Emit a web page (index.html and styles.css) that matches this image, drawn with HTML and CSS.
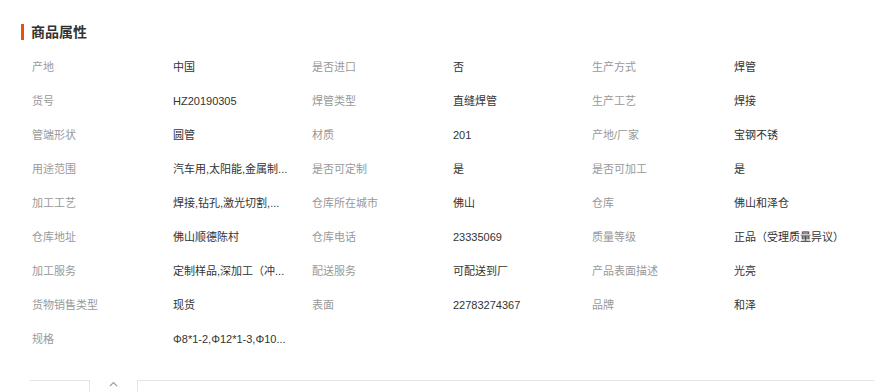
FILE: index.html
```html
<!DOCTYPE html>
<html lang="zh-CN">
<head>
<meta charset="utf-8">
<title>商品属性</title>
<link rel="stylesheet" href="styles.css">
</head>
<body>
<div class="section">
  <h2 class="title">商品属性</h2>
  <div class="attrs">
    <div class="label">产地</div><div class="value">中国</div>
    <div class="label">是否进口</div><div class="value">否</div>
    <div class="label">生产方式</div><div class="value">焊管</div>

    <div class="label">货号</div><div class="value">HZ20190305</div>
    <div class="label">焊管类型</div><div class="value">直缝焊管</div>
    <div class="label">生产工艺</div><div class="value">焊接</div>

    <div class="label">管端形状</div><div class="value">圆管</div>
    <div class="label">材质</div><div class="value">201</div>
    <div class="label">产地/厂家</div><div class="value">宝钢不锈</div>

    <div class="label">用途范围</div><div class="value" title="汽车用,太阳能,金属制品">汽车用,太阳能,金属制...</div>
    <div class="label">是否可定制</div><div class="value">是</div>
    <div class="label">是否可加工</div><div class="value">是</div>

    <div class="label">加工工艺</div><div class="value" title="焊接,钻孔,激光切割,折弯">焊接,钻孔,激光切割,...</div>
    <div class="label">仓库所在城市</div><div class="value">佛山</div>
    <div class="label">仓库</div><div class="value">佛山和泽仓</div>

    <div class="label">仓库地址</div><div class="value">佛山顺德陈村</div>
    <div class="label">仓库电话</div><div class="value">23335069</div>
    <div class="label">质量等级</div><div class="value">正品（受理质量异议）</div>

    <div class="label">加工服务</div><div class="value" title="定制样品,深加工（冲压）">定制样品,深加工（冲...</div>
    <div class="label">配送服务</div><div class="value">可配送到厂</div>
    <div class="label">产品表面描述</div><div class="value">光亮</div>

    <div class="label">货物销售类型</div><div class="value">现货</div>
    <div class="label">表面</div><div class="value">22783274367</div>
    <div class="label">品牌</div><div class="value">和泽</div>

    <div class="label">规格</div><div class="value" title="Φ8*1-2,Φ12*1-3,Φ10*1-2">Φ8*1-2,Φ12*1-3,Φ10...</div>
  </div>
  <div class="tabs">
    <div class="tab-left"></div>
    <div class="tab-toggle">
      <svg width="9" height="6" viewBox="0 0 9 6"><polyline points="1,5 4.5,1.5 8,5" fill="none" stroke="#8fa3b8" stroke-width="1.2"/></svg>
    </div>
    <div class="tab-right"></div>
  </div>
</div>
</body>
</html>
```
FILE: styles.css
```css
html, body {
  margin: 0;
  padding: 0;
  background: #fff;
  font-family: "Liberation Sans", "Noto Sans CJK SC", sans-serif;
  font-size: 11px;
  color: #333;
  overflow: hidden;
}

.section {
  padding: 24px 0 0 21px;
}

.title {
  margin: 0;
  height: 16px;
  line-height: 16px;
  padding-left: 7px;
  border-left: 3px solid #ee4a1c;
  font-size: 14px;
  font-weight: bold;
  color: #333;
}

.attrs {
  display: grid;
  grid-template-columns: 141px 139px 141px 139px 142px 140px;
  margin: 10px 0 0 11px;
}

.label,
.value {
  height: 34px;
  line-height: 35px;
  white-space: nowrap;
  overflow: hidden;
  text-overflow: ellipsis;
}

.label {
  color: #999;
}

.value {
  color: #333;
}

.tabs {
  display: flex;
  margin: 24px 0 0 9px;
  width: 844px;
  height: 20px;
}

.tab-left {
  width: 59px;
  border-top: 1px solid #e5e5e5;
  border-right: 1px solid #e5e5e5;
}

.tab-toggle {
  width: 47px;
  display: flex;
  justify-content: center;
  padding-top: 1px;
}

.tab-toggle svg {
  display: block;
}

.tab-right {
  flex: 1;
  border-top: 1px solid #e5e5e5;
  border-left: 1px solid #e5e5e5;
}
```
